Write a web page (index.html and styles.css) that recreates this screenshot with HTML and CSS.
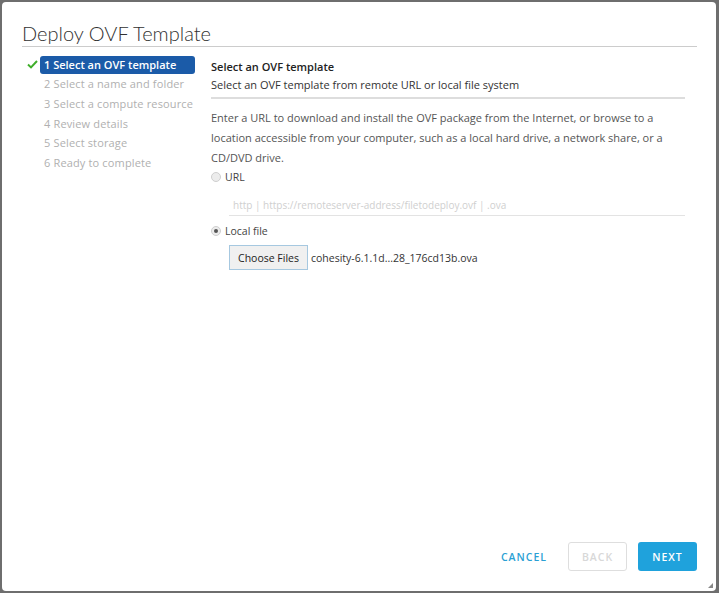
FILE: index.html
```html
<!DOCTYPE html>
<html lang="en">
<head>
    <meta charset="UTF-8">
    <title>Deploy OVF Template</title>
    <link rel="stylesheet" href="styles.css">
</head>
<body>
    <div class="dialog">
        <h1 class="title">Deploy OVF Template</h1>

        <div class="wizard">
            <ul class="steps">
                <li class="step done">
                    <svg class="check" width="11" height="9" viewBox="0 0 11 9"><path d="M1 4.6 L4 7.4 L10 1" fill="none" stroke="#3fae2a" stroke-width="2"/></svg>
                    <span class="step-label active">1 Select an OVF template</span>
                </li>
                <li class="step"><span class="step-label">2 Select a name and folder</span></li>
                <li class="step"><span class="step-label">3 Select a compute resource</span></li>
                <li class="step"><span class="step-label">4 Review details</span></li>
                <li class="step"><span class="step-label">5 Select storage</span></li>
                <li class="step"><span class="step-label">6 Ready to complete</span></li>
            </ul>

            <div class="page">
                <div class="page-head">
                    <p class="page-title">Select an OVF template</p>
                    <p class="page-sub">Select an OVF template from remote URL or local file system</p>
                </div>
                <p class="intro">Enter a URL to download and install the OVF package from the Internet, or browse to a location accessible from your computer, such as a local hard drive, a network share, or a CD/DVD drive.</p>

                <label class="radio"><span class="dot"></span>URL</label>
                <div class="url-field">
                    <input type="text" placeholder="http | https://remoteserver-address/filetodeploy.ovf | .ova">
                </div>

                <label class="radio"><span class="dot checked"></span>Local file</label>
                <div class="file-row">
                    <button class="choose">Choose Files</button>
                    <span class="file-name">cohesity-6.1.1d...28_176cd13b.ova</span>
                </div>
            </div>
        </div>

        <div class="footer">
            <button class="btn link">CANCEL</button>
            <button class="btn outline">BACK</button>
            <button class="btn primary">NEXT</button>
        </div>
        <span class="grip"></span>
    </div>
</body>
</html>
```

FILE: styles.css
```css
* {
    margin: 0;
    padding: 0;
    box-sizing: border-box;
}
body {
    background: #6e6e6e;
    font-family: "Open Sans", "Liberation Sans", sans-serif;
    color: #565656;
}
.dialog {
    position: relative;
    margin: 2px 3px 0 2px;
    height: 589px;
    background: #fff;
    border-radius: 4px;
    display: flex;
    flex-direction: column;
    padding: 0 19px 20px 20px;
}
.title {
    font-family: "Lato", "Open Sans", sans-serif;
    font-weight: 300;
    font-size: 20px;
    color: #313131;
    line-height: 28px;
    padding-top: 17px;
    border-bottom: 1px solid #cccccc;
    height: 45px;
}
.wizard {
    display: flex;
    padding-top: 8px;
}
.steps {
    list-style: none;
    width: 189px;
    flex-shrink: 0;
}
.step {
    display: flex;
    align-items: center;
    height: 19.6px;
    padding-left: 18px;
    font-size: 11px;
}
.step.done {
    padding-left: 5px;
}
.check {
    margin-right: 2px;
}
.step-label {
    color: #b0b0b0;
    padding-left: 4px;
    line-height: 18px;
    letter-spacing: 0.15px;
}
.step-label.active {
    background: #1b5ba8;
    color: #fff;
    font-weight: 600;
    border-radius: 3px;
    width: 155px;
    letter-spacing: 0;
}
.page {
    flex: 1;
    padding-right: 12px;
}
.page-head {
    border-bottom: 2px solid #dddddd;
    padding-bottom: 4px;
}
.page-title {
    font-size: 11px;
    font-weight: 600;
    color: #222;
    line-height: 18px;
    padding-top: 3px;
}
.page-sub {
    font-size: 11px;
    color: #333;
    line-height: 17px;
}
.intro {
    font-size: 11px;
    line-height: 19.8px;
    margin-top: 9px;
    color: #555;
}
.radio {
    display: flex;
    align-items: center;
    font-size: 10.5px;
    color: #444;
    height: 20px;
}
.dot {
    width: 10px;
    height: 10px;
    border-radius: 50%;
    border: 1px solid #cfcfcf;
    background: #ececec;
    margin-right: 4px;
    position: relative;
}
.dot.checked::after {
    content: "";
    position: absolute;
    left: 2px;
    top: 2px;
    width: 4px;
    height: 4px;
    border-radius: 50%;
    background: #555;
}
.url-field {
    padding-left: 18px;
    margin-top: 5px;
    margin-bottom: 5px;
}
.url-field input {
    width: 100%;
    border: none;
    border-bottom: 1px solid #e3e3e3;
    font-family: inherit;
    font-size: 10px;
    padding: 0 4px 2px 4px;
    height: 19px;
    outline: none;
}
.url-field input::placeholder {
    color: #cfcfcf;
}
.file-row {
    display: flex;
    align-items: center;
    padding-left: 18px;
    margin-top: 4px;
}
.choose {
    font-family: inherit;
    font-size: 10.5px;
    color: #222;
    background: #f0f0f0;
    border: 1px solid #a6c8e0;
    height: 25px;
    width: 79px;
    margin-right: 3px;
}
.file-name {
    font-size: 10.5px;
    color: #333;
}
.footer {
    margin-top: auto;
    display: flex;
    justify-content: flex-end;
    align-items: center;
    gap: 11px;
}
.btn {
    font-family: inherit;
    font-size: 10.5px;
    font-weight: 600;
    letter-spacing: 1px;
    height: 29px;
    border-radius: 3px;
    background: none;
    border: 1px solid transparent;
    padding: 0 12px;
}
.btn.link {
    color: #2a9fd4;
    padding: 0 9px;
}
.btn.outline {
    color: #d8d8d8;
    border-color: #dedede;
    width: 59px;
}
.btn.primary {
    background: #1fa2dc;
    color: #fff;
    width: 59px;
}
.grip {
    position: absolute;
    right: 3px;
    bottom: 3px;
    width: 0;
    height: 0;
    border-left: 5px solid transparent;
    border-bottom: 5px solid #888;
}
```
